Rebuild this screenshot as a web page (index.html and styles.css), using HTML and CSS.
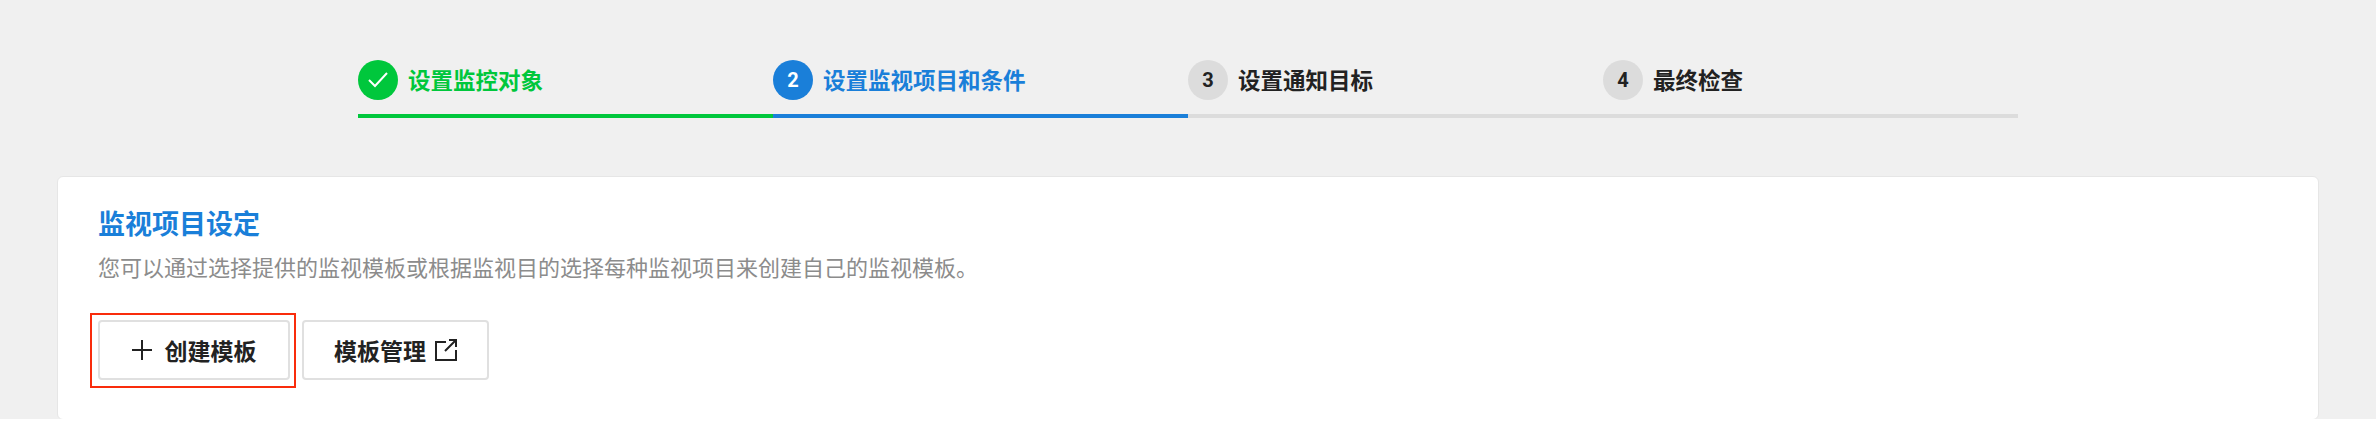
FILE: index.html
```html
<!DOCTYPE html>
<html lang="zh-CN">
<head>
  <meta charset="UTF-8">
  <title>监视项目设定</title>
  <link rel="stylesheet" href="styles.css">
</head>
<body>
  <div class="page">
    <ol class="steps">
      <li class="step step-done">
        <span class="step-num">
          <svg width="20" height="16" viewBox="0 0 20 16" fill="none" stroke="#fff" stroke-width="2"><path d="M1 8l6 6L19 1"/></svg>
        </span>
        <span class="step-name">设置监控对象</span>
      </li>
      <li class="step step-active">
        <span class="step-num">2</span>
        <span class="step-name">设置监视项目和条件</span>
      </li>
      <li class="step">
        <span class="step-num">3</span>
        <span class="step-name">设置通知目标</span>
      </li>
      <li class="step">
        <span class="step-num">4</span>
        <span class="step-name">最终检查</span>
      </li>
    </ol>

    <div class="card">
      <h2 class="card-title">监视项目设定</h2>
      <p class="card-desc">您可以通过选择提供的监视模板或根据监视目的选择每种监视项目来创建自己的监视模板。</p>
      <div class="btn-row">
        <button type="button" class="btn btn-create">
          <svg width="20" height="20" viewBox="0 0 20 20" fill="none" stroke="#222" stroke-width="2"><path d="M10 0v20M0 10h20"/></svg>
          创建模板
          <span class="highlight"></span>
        </button>
        <button type="button" class="btn btn-manage">
          模板管理
          <svg width="22" height="22" viewBox="0 0 22 22" fill="none" stroke="#222" stroke-width="2"><path d="M11 3H1v18h20V11M14 1h7v7M21 1L10 12"/></svg>
        </button>
      </div>
    </div>
  </div>
</body>
</html>
```

FILE: styles.css
```css
* {
  box-sizing: border-box;
}

body {
  margin: 0;
  background-color: #fff;
  font-family: Roboto, "Noto Sans CJK SC", sans-serif;
  color: #222;
}

.page {
  height: 419px;
  padding-top: 60px;
  background-color: #f0f0f0;
  overflow: hidden;
}

.steps {
  display: flex;
  width: 1660px;
  margin: 0 auto;
  padding: 0;
  list-style: none;
}

.step {
  flex: 1;
  display: flex;
  align-items: center;
  gap: 10px;
  padding-bottom: 14px;
  border-bottom: 4px solid #dcdcdc;
}

.step-num {
  display: flex;
  align-items: center;
  justify-content: center;
  width: 40px;
  height: 40px;
  border-radius: 50%;
  background-color: #dcdcdc;
  font-size: 20px;
  font-weight: 700;
}

.step-name {
  margin-top: -3px;
  font-size: 22.5px;
  font-weight: 700;
}

.step-done {
  border-color: #00c73c;
  color: #00c73c;
}

.step-active {
  border-color: #1a7fd9;
  color: #1a7fd9;
}

.step-done .step-num {
  background-color: #00c73c;
}

.step-active .step-num {
  color: #fff;
  background-color: #1a7fd9;
}

.card {
  height: 244px;
  margin: 58px 57px 0;
  padding: 30px 40px 0;
  background-color: #fff;
  border: 1px solid #e6e6e6;
  border-radius: 6px;
}

.card-title {
  margin: 0;
  font-size: 27px;
  font-weight: 700;
  line-height: 36px;
  color: #1a7fd9;
}

.card-desc {
  margin: 10px 0 0;
  font-size: 22px;
  line-height: 32px;
  color: #8c8c8c;
}

.btn-row {
  display: flex;
  gap: 12px;
  margin-top: 35px;
}

.btn {
  position: relative;
  display: flex;
  align-items: center;
  justify-content: center;
  height: 60px;
  padding: 0;
  background-color: #fff;
  border: 2px solid #e0e0e0;
  border-radius: 4px;
  font-family: inherit;
  font-size: 23px;
  font-weight: 700;
  color: #222;
}

.btn-create {
  width: 192px;
  gap: 13px;
}

.btn-manage {
  width: 187px;
  gap: 9px;
}

.highlight {
  position: absolute;
  top: -9px;
  right: -8px;
  bottom: -10px;
  left: -10px;
  border: 2px solid #f92c0c;
}
```
